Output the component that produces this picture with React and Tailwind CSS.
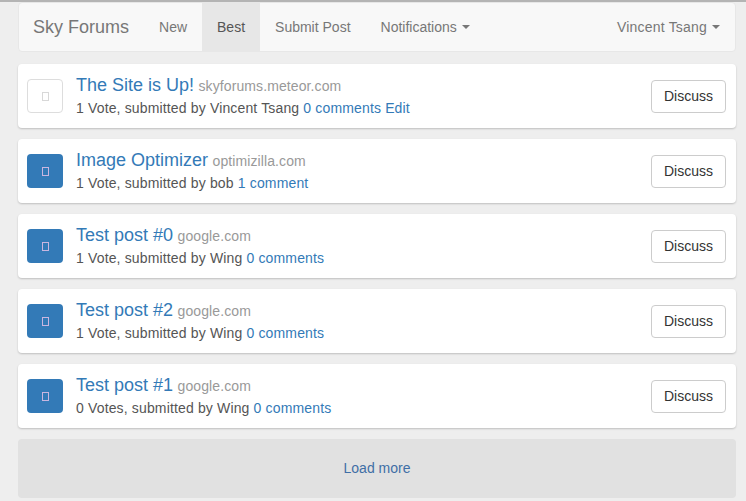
import React from "react";

const posts = [
  { title: "The Site is Up!", domain: "skyforums.meteor.com", votes: "1 Vote", author: "Vincent Tsang", comments: "0 comments", edit: true, voted: false },
  { title: "Image Optimizer", domain: "optimizilla.com", votes: "1 Vote", author: "bob", comments: "1 comment", voted: true },
  { title: "Test post #0", domain: "google.com", votes: "1 Vote", author: "Wing", comments: "0 comments", voted: true },
  { title: "Test post #2", domain: "google.com", votes: "1 Vote", author: "Wing", comments: "0 comments", voted: true },
  { title: "Test post #1", domain: "google.com", votes: "0 Votes", author: "Wing", comments: "0 comments", voted: true },
];

function Caret() {
  return (
    <span className="ml-[5px] inline-block h-0 w-0 border-x-[4px] border-t-[4px] border-x-transparent border-t-[#777] align-middle" />
  );
}

function PostItem({ post }) {
  return (
    <div className="flex h-[64px] items-center rounded-[4px] bg-white pl-[9px] pr-[10px] shadow-[0_1px_2px_rgba(0,0,0,0.2)]">
      <div
        className={
          post.voted
            ? "flex h-[34px] w-[36px] items-center justify-center rounded-[4px] bg-[#337ab7]"
            : "flex h-[34px] w-[36px] items-center justify-center rounded-[4px] border border-[#ddd] bg-white"
        }
      >
        <span
          className={
            post.voted
              ? "block h-[9px] w-[7px] border border-[#c9b6e0]"
              : "block h-[9px] w-[7px] border border-[#d8d8d8]"
          }
        />
      </div>
      <div className="ml-[13px] flex-1">
        <div className="leading-[20px]">
          <a className="text-[18px] text-[#337ab7]">{post.title}</a>{" "}
          <span className="text-[14px] tracking-[0.1px] text-[#999]">{post.domain}</span>
        </div>
        <div className="mt-[2px] text-[14px] leading-[20px] tracking-[0.15px] text-[#555]">
          {post.votes}, submitted by {post.author}{" "}
          <a className="text-[#337ab7]">{post.comments}</a>
          {post.edit && <a className="text-[#337ab7]"> Edit</a>}
        </div>
      </div>
      <button className="mt-[1px] h-[33px] rounded-[4px] border border-[#ccc] bg-white px-[12px] text-[14px] text-[#333]">
        Discuss
      </button>
    </div>
  );
}

export default function App() {
  return (
    <div className="min-h-[501px] bg-[#eeeeee] font-['Liberation_Sans',Arial,sans-serif]">
      <div className="h-[2px] bg-[#b4b4b4]" />
      <div className="pl-[18px] pr-[10px]">
        <nav className="flex h-[50px] items-stretch rounded-[4px] border border-[#e7e7e7] bg-[#f8f8f8] text-[14px] text-[#777]">
          <a className="flex items-center pl-[14px] pr-[15px] text-[18px]">Sky Forums</a>
          <a className="flex items-center px-[15px]">New</a>
          <a className="flex items-center bg-[#e7e7e7] px-[15px] text-[#555]">Best</a>
          <a className="flex items-center px-[15px]">Submit Post</a>
          <a className="flex items-center px-[15px]">
            Notifications
            <Caret />
          </a>
          <div className="flex-1" />
          <a className="flex items-center px-[15px] tracking-[0.2px]">
            Vincent Tsang
            <Caret />
          </a>
        </nav>
        <div className="mt-[12px] flex flex-col gap-[11px]">
          {posts.map((post, i) => (
            <PostItem key={i} post={post} />
          ))}
          <div className="flex h-[59px] items-center justify-center rounded-[4px] bg-[#e1e1e1] text-[14px] text-[#3f6fa6]">
            Load more
          </div>
        </div>
      </div>
    </div>
  );
}
